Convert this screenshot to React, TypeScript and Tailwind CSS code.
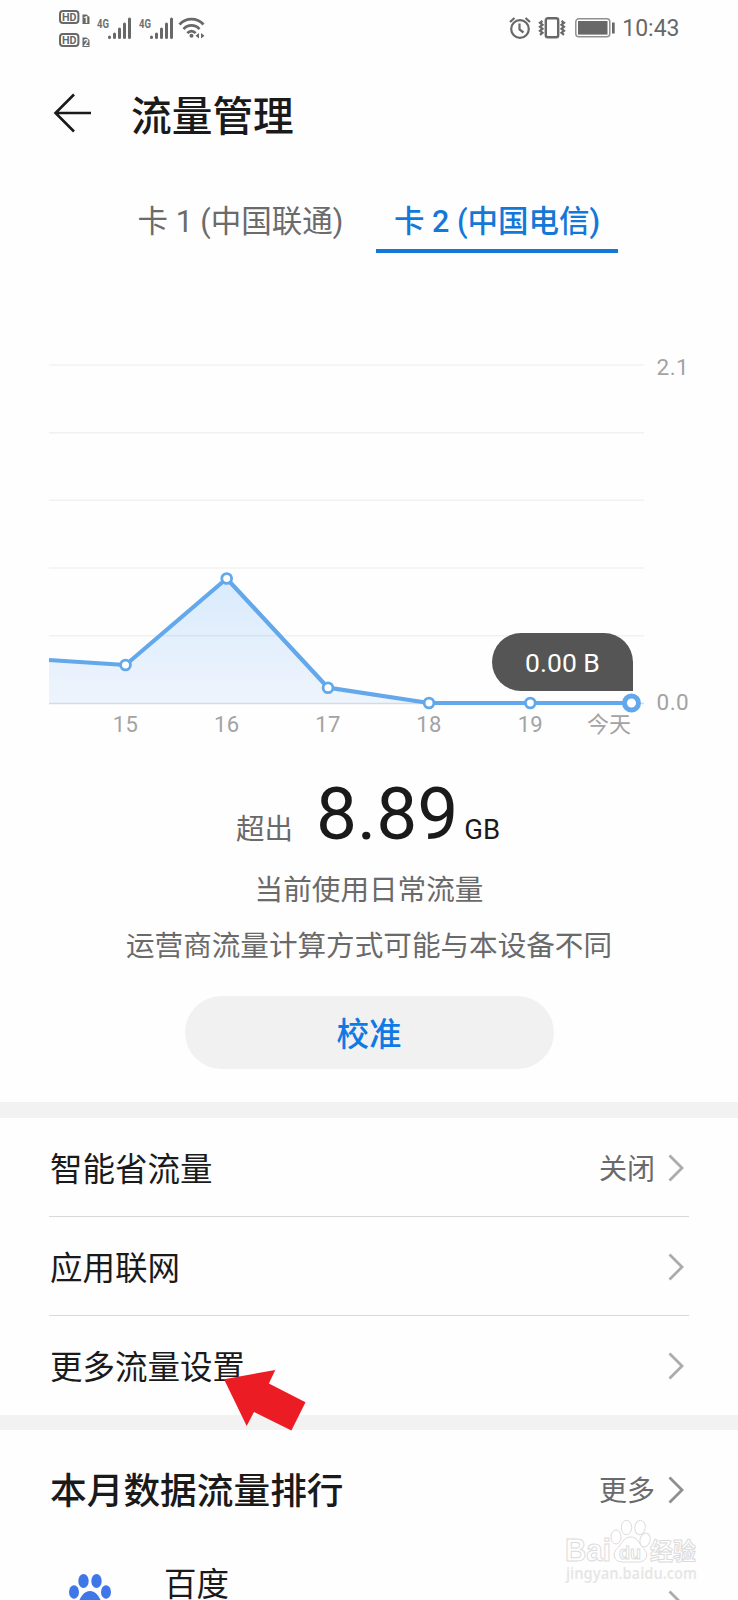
import type { ReactNode } from 'react';

const days = [
  { label: '15', x: 125.5, y: 665 },
  { label: '16', x: 226.7, y: 578.5 },
  { label: '17', x: 328, y: 687.7 },
  { label: '18', x: 429, y: 703 },
  { label: '19', x: 530.3, y: 703 },
];

const gridLines = [365, 432.7, 500.3, 568, 635.7];

export default function App() {
  return (
    <div className="relative w-[738px] h-[1600px] overflow-hidden bg-[#fefefe] text-[#1a1a1a] font-['Roboto','Noto_Sans_CJK_SC',sans-serif]">
      <StatusBar />

      {/* Header */}
      <header className="flex items-center h-[118px] pl-[52px]">
        <svg className="mb-[4px]" width="42" height="42" viewBox="0 0 42 42" fill="none" stroke="#1a1a1a" strokeWidth="2.6">
          <path d="M22 2.5 3.5 21 22 39.5M3.5 21H39" />
        </svg>
        <h1 className="ml-[37px] pt-[4px] text-[40.7px] leading-none font-medium">流量管理</h1>
      </header>

      {/* SIM tabs */}
      <nav className="flex h-[79px] pl-[120px] text-[30.5px] leading-[40px]">
        <button className="w-[241px] h-[79px] pt-[28px] flex justify-center text-[#6b6b6b]">
          卡 1 (中国联通)
        </button>
        <button className="ml-[15px] w-[242px] h-[79px] pt-[28px] flex justify-center font-medium text-[#1478d8] border-b-4 border-[#1478d8]">
          卡 2 (中国电信)
        </button>
      </nav>

      <UsageChart />

      {/* Summary */}
      <section className="flex flex-col items-center text-[28.6px] text-[#6a6a6a]">
        <div className="flex items-baseline h-[89px] pt-[2px] pr-[2px] leading-[80px]">
          <span className="text-[28.5px]">超出</span>
          <span className="ml-[23px] text-[73px] text-[#1a1a1a]">8.89</span>
          <span className="ml-[6px] text-[27.5px] text-[#1a1a1a]">GB</span>
        </div>
        <p className="h-[56px] leading-[58px]">当前使用日常流量</p>
        <p className="h-[56px] leading-[58px]">运营商流量计算方式可能与本设备不同</p>
        <button className="mt-[23px] w-[369px] h-[73px] pt-[5px] rounded-full bg-[#f1f1f1] text-[32.5px] font-medium text-[#0f7ae5]">
          校准
        </button>
      </section>

      <div className="mt-[33px] h-[16px] bg-[#f2f2f2]" />

      {/* Settings */}
      <section className="px-[49px]">
        <Row value="关闭">智能省流量</Row>
        <Row>应用联网</Row>
        <Row last>更多流量设置</Row>
      </section>

      <div className="h-[15px] bg-[#f2f2f2]" />

      {/* Ranking */}
      <section className="pl-[50px] pr-[49px]">
        <div className="flex items-center h-[119px]">
          <h2 className="pt-[6px] text-[36.7px] leading-none font-medium">本月数据流量排行</h2>
          <span className="ml-auto mr-[12px] pt-[4px] text-[28px] text-[#6a6a6a]">更多</span>
          <Chevron color="#8f8f8f" />
        </div>
        <div className="flex items-start h-[100px]">
          <svg className="ml-[18px] mt-[25px]" width="44" height="44" viewBox="0 0 44 44" fill="#3f76e8">
            <ellipse cx="15.5" cy="7" rx="5.2" ry="7" />
            <ellipse cx="28.5" cy="7" rx="5.2" ry="7" />
            <ellipse cx="6" cy="18" rx="5" ry="6.7" />
            <ellipse cx="38" cy="18" rx="5" ry="6.7" />
            <path d="M22 17c-5 0-8 4-10 8-3 5-7 7-5 12 2 6 9 4 15 4s13 2 15-4c2-5-2-7-5-12-2-4-5-8-10-8Z" />
          </svg>
          <span className="ml-[52px] mt-[16px] text-[32.5px] leading-[40px]">百度</span>
          <div className="ml-auto mt-[40px]">
            <Chevron />
          </div>
        </div>
      </section>

      {/* Pointer */}
      <svg className="absolute left-[220px] top-[1366px]" width="90" height="68" viewBox="220 1366 90 68">
        <path fill="#ec1c24" d="M224 1379.3 275.3 1370 268.9 1383.5 305.5 1402.3 291.4 1430.5 254 1412 246.7 1426Z" />
      </svg>

      <Watermark />
    </div>
  );
}

function Row({ children, value, last }: { children: ReactNode; value?: string; last?: boolean }) {
  return (
    <div className={`flex items-center text-[32.5px] ${last ? 'h-[99px] pb-[2px]' : 'h-[99px] border-b border-[#d9d9d9]'}`}>
      <span className="pl-px pt-[7px]">{children}</span>
      {value && <span className="ml-auto pt-[6px] text-[28px] text-[#6a6a6a]">{value}</span>}
      <div className={`pt-[2px] ${value ? 'ml-[12px]' : 'ml-auto'}`}>
        <Chevron />
      </div>
    </div>
  );
}

function Chevron({ color = '#ababab' }: { color?: string }) {
  return (
    <svg className="mr-[4px] shrink-0" width="18" height="30" viewBox="0 0 18 30" fill="none" stroke={color} strokeWidth="2.8">
      <path d="M2.5 2.5 15 15 2.5 27.5" />
    </svg>
  );
}

function UsageChart() {
  const line = `49,660 ${days.map((d) => `${d.x},${d.y}`).join(' ')} 631,703`;

  return (
    <div className="relative h-[519px]">
      <svg width="738" height="519" viewBox="0 253 738 519" className="block">
        <defs>
          <linearGradient id="area" x1="0" y1="578" x2="0" y2="703" gradientUnits="userSpaceOnUse">
            <stop offset="0" stopColor="#d9ebfc" />
            <stop offset="1" stopColor="#eef4fc" />
          </linearGradient>
        </defs>
        <polygon points={`${line} 49,703`} fill="url(#area)" />
        {gridLines.map((y) => (
          <path key={y} d={`M49 ${y}H644`} stroke="#000" strokeOpacity="0.05" strokeWidth="1.5" />
        ))}
        <path d="M49 703.5H644" stroke="#d8dade" strokeWidth="1.5" />
        <polyline points={line} fill="none" stroke="#62a8ea" strokeWidth="4.2" strokeLinejoin="round" />
        {days.map((d) => (
          <circle key={d.label} cx={d.x} cy={d.y} r="4.9" fill="#fff" stroke="#62a8ea" strokeWidth="2.8" />
        ))}
        <circle cx="631.5" cy="703" r="7" fill="#fff" stroke="#62a8ea" strokeWidth="5" />
        <g fill="#a3a3a3" fontSize="22">
          {days.map((d) => (
            <text key={d.label} x={d.x} y="732" textAnchor="middle" letterSpacing="0.3">{d.label}</text>
          ))}
          <text x="587" y="732">今天</text>
          <text x="656.5" y="374.5" fontSize="22.5" letterSpacing="0.5">2.1</text>
          <text x="656.5" y="710" fontSize="22.5" letterSpacing="0.5">0.0</text>
        </g>
      </svg>
      <div className="absolute left-[492px] top-[380px] w-[141px] h-[58px] pt-[2px] flex items-center justify-center rounded-[29px] rounded-br-none bg-[#555] text-[26.5px] text-white">
        0.00 B
      </div>
    </div>
  );
}

function Signal() {
  return (
    <svg width="36" height="24" viewBox="0 0 36 24">
      <text x="0" y="12" fontSize="13" fontWeight="700" fill="#707070" textLength="12" lengthAdjust="spacingAndGlyphs">4G</text>
      <g stroke="#686868" strokeWidth="3" strokeLinecap="round">
        <path d="M12.500 21v.5M17.500 18v3.500M22.500 13v8.500M27.500 8v13.500M32.500 3v18.500" />
      </g>
    </svg>
  );
}

function HdBadge({ sim }: { sim: string }) {
  return (
    <svg width="31" height="14" viewBox="0 0 31 14">
      <rect x="1" y="1" width="18.4" height="12" rx="3" fill="#fff" stroke="#686868" strokeWidth="2" />
      <text x="3" y="11.2" fontSize="11.5" fontWeight="700" fill="#686868" textLength="14.5" lengthAdjust="spacingAndGlyphs">HD</text>
      <path d="M23.5 4.5h4l3 2.5v7h-7Z" fill="#686868" />
      <text x="24.5" y="12.8" fontSize="9" fontWeight="700" fill="#fff">{sim}</text>
    </svg>
  );
}

function StatusBar() {
  return (
    <div className="flex items-center h-[56px] pl-[58.5px] pr-[58.5px]">
      <div className="flex flex-col gap-[9px]">
        <HdBadge sim="1" />
        <HdBadge sim="2" />
      </div>
      <div className="flex items-center ml-[7px] gap-[6px]">
        <Signal />
        <Signal />
      </div>
      <svg className="ml-[3px]" width="28" height="24" viewBox="0 0 28 24" fill="none" stroke="#686868" strokeWidth="2.7">
        <path d="M1.5 8.5C8 1.3 19 1.3 25.5 8.5M5.5 13.2C10 8.2 17 8.2 21.5 13.2M9.3 17.2c2.6-2.8 5.8-2.8 8.4 0" />
        <circle cx="13.5" cy="19.8" r="2" fill="#686868" stroke="none" />
        <path d="M21 17v5.5l-3.500-2.750ZM23 17v5.5l3.500-2.750Z" fill="#686868" stroke="none" />
      </svg>

      <div className="flex items-center ml-auto text-[#686868]">
        <svg width="22" height="24" viewBox="0 0 22 24" fill="none" stroke="#686868" strokeWidth="2.2">
          <circle cx="11" cy="13" r="8.8" />
          <path d="M10.5 7.5v6l4 3M1 6l4.5-4M21 6l-4.5-4" />
        </svg>
        <svg className="ml-[7px]" width="28" height="24" viewBox="0 0 28 24" fill="none" stroke="#686868" strokeWidth="2.2">
          <rect x="7.8" y="2.2" width="12.4" height="19" rx="2" strokeWidth="2.4" />
          <path d="M4.5 5 2 6.8l2.5 2-2.5 2 2.5 2-2.5 2 2.5 2-2.5 2M23.5 5 26 6.8l-2.5 2 2.5 2-2.5 2 2.5 2-2.5 2 2.5 2" />
        </svg>
        <svg className="ml-[9px]" width="40" height="22" viewBox="0 0 40 22">
          <rect x="0.8" y="1.8" width="34" height="18" rx="3" fill="#fff" stroke="#909090" strokeWidth="1.5" />
          <rect x="3" y="4" width="29.5" height="13.6" fill="#686868" />
          <rect x="37" y="5.5" width="2.7" height="11" fill="#686868" />
        </svg>
        <span className="ml-[7px] text-[23px] leading-none">10:43</span>
      </div>
    </div>
  );
}

function Watermark() {
  return (
    <svg
      className="absolute left-[560px] top-[1514px]"
      width="142"
      height="74"
      viewBox="560 1514 142 74"
      fill="#fff"
      fillOpacity="0.85"
      stroke="#dcdcdc"
      strokeWidth="1"
    >
      <text x="565" y="1561" fontSize="31" fontWeight="700" textLength="46" lengthAdjust="spacingAndGlyphs" fontFamily="Liberation Sans, sans-serif">Bai</text>
      <ellipse cx="616" cy="1537" rx="5" ry="7" />
      <ellipse cx="626.5" cy="1527.5" rx="5.2" ry="7.2" />
      <ellipse cx="640" cy="1527.5" rx="5.2" ry="7.2" transform="rotate(8 640 1527.5)" />
      <ellipse cx="645" cy="1540" rx="5" ry="7" transform="rotate(15 645 1540)" />
      <path d="M630.5 1537c-6 0-8 5-11 9-4 4-6 6-5 11 2 6 9 5 16 5s14 1 16-5c1-5-2-7-5-11-3-4-5-9-11-9Z" />
      <text x="619" y="1558.5" fontSize="19" fontWeight="700" fontFamily="Liberation Sans, sans-serif" textLength="22" lengthAdjust="spacingAndGlyphs">du</text>
      <text x="650" y="1559.5" fontSize="23.5" fontWeight="700" fontFamily="Noto Sans CJK SC, sans-serif" textLength="46" lengthAdjust="spacingAndGlyphs">经验</text>
      <text x="566" y="1579" fontSize="16" fontWeight="600" fill="#e2e2e2" stroke="none" fontFamily="Noto Sans, sans-serif" textLength="131" lengthAdjust="spacingAndGlyphs">jingyan.baidu.com</text>
    </svg>
  );
}
